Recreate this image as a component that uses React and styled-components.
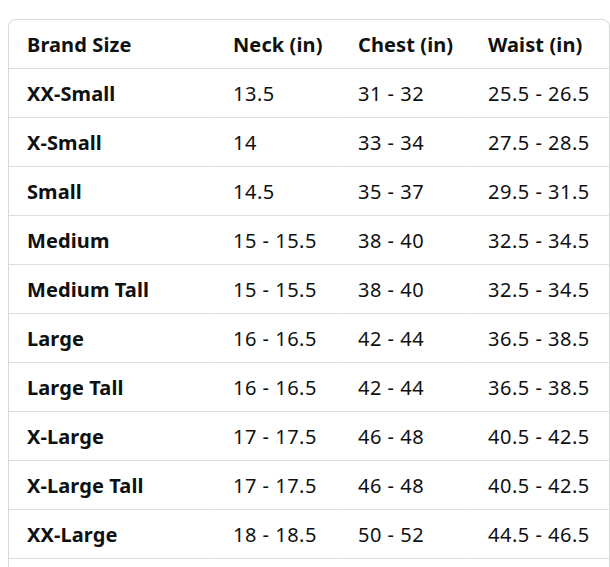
import React from 'react';
import styled, { createGlobalStyle } from 'styled-components';

const GlobalStyle = createGlobalStyle`
  body {
    margin: 0;
    background: #fff;
    font-family: "Noto Sans", "Liberation Sans", sans-serif;
    color: #0f1111;
  }
`;

const Page = styled.div`
  padding: 19px 0 0 8px;
`;

const Chart = styled.div`
  width: 600px;
  padding-bottom: 24px;
  border: 1px solid #d5d9d9;
  border-radius: 8px;
  overflow: hidden;
`;

const Table = styled.table`
  width: 100%;
  border-collapse: separate;
  border-spacing: 0;
  table-layout: fixed;
`;

const Cell = styled.td`
  height: 48px;
  padding: 0 0 0 18px;
  border-bottom: 1px solid #dddddd;
  border-left: ${(p) => (p.$first ? 'none' : '1px solid #fff')};
  font-size: 20px;
  font-weight: ${(p) => (p.$bold ? 700 : 400)};
  letter-spacing: ${(p) => (p.$bold ? '0.1px' : '0.5px')};
  white-space: nowrap;
  text-align: left;
  vertical-align: middle;
`;

const HeadCell = styled(Cell).attrs({ as: 'th' })``;

const columns = ['Brand Size', 'Neck (in)', 'Chest (in)', 'Waist (in)'];
const widths = [205, 125, 130, 140];

const rows = [
  ['XX-Small', '13.5', '31 - 32', '25.5 - 26.5'],
  ['X-Small', '14', '33 - 34', '27.5 - 28.5'],
  ['Small', '14.5', '35 - 37', '29.5 - 31.5'],
  ['Medium', '15 - 15.5', '38 - 40', '32.5 - 34.5'],
  ['Medium Tall', '15 - 15.5', '38 - 40', '32.5 - 34.5'],
  ['Large', '16 - 16.5', '42 - 44', '36.5 - 38.5'],
  ['Large Tall', '16 - 16.5', '42 - 44', '36.5 - 38.5'],
  ['X-Large', '17 - 17.5', '46 - 48', '40.5 - 42.5'],
  ['X-Large Tall', '17 - 17.5', '46 - 48', '40.5 - 42.5'],
  ['XX-Large', '18 - 18.5', '50 - 52', '44.5 - 46.5'],
];

export default function App() {
  return (
    <Page>
      <GlobalStyle />
      <Chart>
        <Table>
          <colgroup>
            {widths.map((w, i) => (
              <col key={i} style={{ width: w }} />
            ))}
          </colgroup>
          <thead>
            <tr>
              {columns.map((c, i) => (
                <HeadCell key={c} $bold $first={i === 0}>
                  {c}
                </HeadCell>
              ))}
            </tr>
          </thead>
          <tbody>
            {rows.map((r) => (
              <tr key={r[0]}>
                {r.map((v, i) => (
                  <Cell key={i} $bold={i === 0} $first={i === 0}>
                    {v}
                  </Cell>
                ))}
              </tr>
            ))}
          </tbody>
        </Table>
      </Chart>
    </Page>
  );
}
